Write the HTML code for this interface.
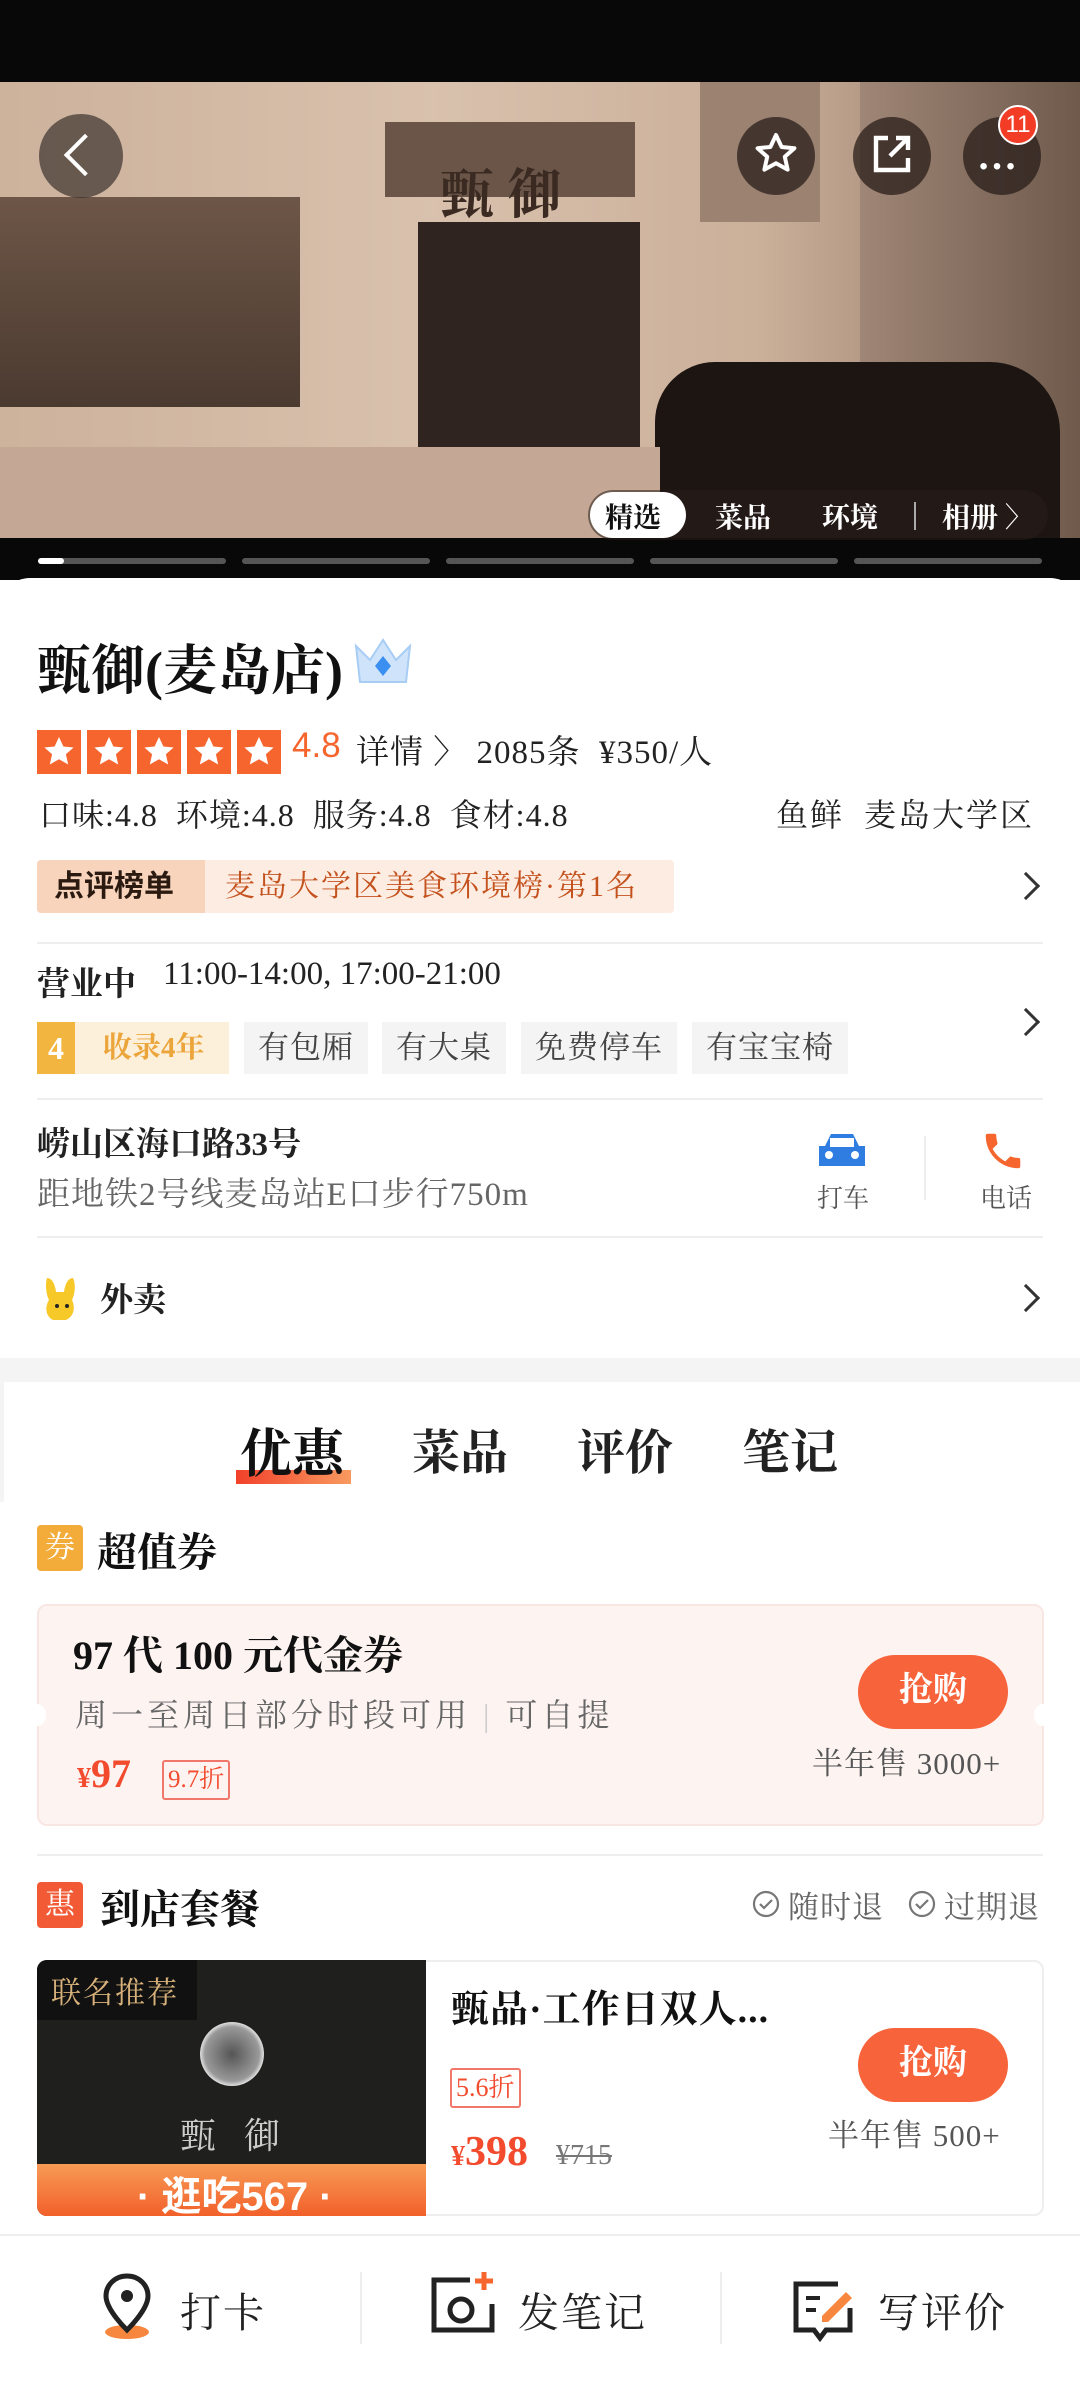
<!DOCTYPE html>
<html><head><meta charset="utf-8"><style>
*{margin:0;padding:0;box-sizing:border-box}
body{width:1080px;height:2400px;overflow:hidden;background:#fff;font-family:"Liberation Serif","Noto Serif CJK SC",serif;color:#222;position:relative}
.a{position:absolute;white-space:nowrap}
.b{font-weight:bold}
.chev{position:absolute;width:20px;height:20px;border-right:3px solid #333;border-top:3px solid #333;transform:rotate(45deg)}
.tag{position:absolute;top:1022px;height:52px;background:#f4f4f4;color:#444;font-size:31px;line-height:52px;padding:0 14px;letter-spacing:1px}
.hr{position:absolute;left:37px;right:37px;height:2px;background:#eee}
.btn{position:absolute;width:150px;height:74px;border-radius:37px;background:#f7633a;color:#fff;font-size:34px;font-weight:bold;text-align:center;line-height:72px}
</style></head><body>
<div class="a" style="left:0;top:0;width:1080px;height:580px;background:#080808"></div>
<!-- photo -->
<div class="a" style="left:0;top:82px;width:1080px;height:456px;background:linear-gradient(90deg,#cdb29c,#d8c1ad 40%,#cbb09a 70%,#8a7260);overflow:hidden">
 <div class="a" style="left:0;top:115px;width:300px;height:210px;background:linear-gradient(#6d5647,#4b3a30)"></div>
 <div class="a" style="left:385px;top:40px;width:250px;height:75px;background:#6a5548"></div>
 <div class="a" style="left:418px;top:140px;width:222px;height:280px;background:#2f241f"></div>
 <div class="a" style="left:700px;top:0;width:120px;height:140px;background:#9c8270"></div>
 <div class="a" style="left:860px;top:0;width:220px;height:456px;background:linear-gradient(90deg,#9f8676,#6f5a4c)"></div>
 <div class="a" style="left:655px;top:280px;width:405px;height:180px;border-radius:60px 70px 0 0;background:#1d1512"></div>
 <div class="a" style="left:0;top:365px;width:660px;height:91px;background:#c4a895"></div>
 <div class="a" style="left:440px;top:70px;font-size:54px;color:#3a2a22;font-weight:bold">甄 御</div>
</div>
<!-- top buttons -->
<div class="a" style="left:39px;top:114px;width:84px;height:84px;border-radius:50%;background:rgba(60,50,45,.7)"></div>
<div class="a" style="left:70px;top:140px;width:30px;height:30px;border-left:4px solid #fff;border-bottom:4px solid #fff;transform:rotate(45deg)"></div>
<div class="a" style="left:737px;top:117px;width:78px;height:78px;border-radius:50%;background:rgba(40,30,25,.75)"></div>
<svg class="a" style="left:752px;top:130px" width="48" height="48" viewBox="0 0 24 24"><path d="M12 2.5l2.8 6 6.4.6-4.8 4.3 1.4 6.4L12 16.6 6.2 19.8l1.4-6.4L2.8 9.1l6.4-.6z" fill="none" stroke="#fff" stroke-width="2" stroke-linejoin="round"/></svg>
<div class="a" style="left:853px;top:117px;width:78px;height:78px;border-radius:50%;background:rgba(40,30,25,.75)"></div>
<svg class="a" style="left:868px;top:130px" width="48" height="48" viewBox="0 0 24 24"><path d="M10 4H4v16h16v-6M14 4h6v6M20 4l-9 9" fill="none" stroke="#fff" stroke-width="2.2"/></svg>
<div class="a" style="left:963px;top:117px;width:78px;height:78px;border-radius:50%;background:rgba(40,30,25,.75)"></div>
<div class="a" style="left:977px;top:132px;color:#fff;font-size:40px;font-weight:bold">…</div>
<div class="a" style="left:998px;top:105px;width:40px;height:40px;border-radius:50%;background:#f23c26;border:2px solid #fff;color:#fff;font-size:24px;text-align:center;line-height:36px;font-family:'Liberation Sans',sans-serif">11</div>
<!-- photo tabs -->
<div class="a" style="left:588px;top:490px;width:460px;height:50px;border-radius:25px;background:rgba(40,30,25,.55)"></div>
<div class="a" style="left:590px;top:492px;width:96px;height:46px;border-radius:23px;background:#fff"></div>
<div class="a b" style="left:605px;top:496px;font-size:28px;color:#111">精选</div>
<div class="a b" style="left:715px;top:496px;font-size:28px;color:#fff">菜品</div>
<div class="a b" style="left:822px;top:496px;font-size:28px;color:#fff">环境</div>
<div class="a" style="left:914px;top:502px;width:2px;height:28px;background:#aaa"></div>
<div class="a b" style="left:942px;top:496px;font-size:28px;color:#fff">相册 〉</div>
<!-- progress -->
<div class="a" style="left:38px;top:558px;width:188px;height:6px;border-radius:3px;background:#555"></div>
<div class="a" style="left:38px;top:558px;width:26px;height:6px;border-radius:3px;background:#fff"></div>
<div class="a" style="left:242px;top:558px;width:188px;height:6px;border-radius:3px;background:#555"></div>
<div class="a" style="left:446px;top:558px;width:188px;height:6px;border-radius:3px;background:#555"></div>
<div class="a" style="left:650px;top:558px;width:188px;height:6px;border-radius:3px;background:#555"></div>
<div class="a" style="left:854px;top:558px;width:188px;height:6px;border-radius:3px;background:#555"></div>
<!-- card -->
<div class="a" style="left:0;top:578px;width:1080px;height:780px;background:#fff;border-radius:30px 30px 0 0"></div>
<div class="a b" style="left:37px;top:628px;font-size:54px;color:#111">甄御(麦岛店)</div>
<svg class="a" style="left:350px;top:636px" width="66" height="56" viewBox="0 0 66 56"><path d="M6 10l14 14L33 4l13 20 14-14-4 36H10z" fill="#cfe4fb" stroke="#a8cdf5" stroke-width="2"/><path d="M33 20l8 10-8 10-8-10z" fill="#3b8ff0"/></svg>
<!-- stars -->
<div class="a" style="left:37px;top:730px;display:flex;gap:6px">
 <svg width="44" height="44"><rect width="44" height="44" fill="#f6652e"/><path d="M22 7l4.4 9.5 10.2 1-7.7 6.8 2.3 10.2L22 29.2l-9.2 5.3 2.3-10.2-7.7-6.8 10.2-1z" fill="#fff"/></svg>
 <svg width="44" height="44"><rect width="44" height="44" fill="#f6652e"/><path d="M22 7l4.4 9.5 10.2 1-7.7 6.8 2.3 10.2L22 29.2l-9.2 5.3 2.3-10.2-7.7-6.8 10.2-1z" fill="#fff"/></svg>
 <svg width="44" height="44"><rect width="44" height="44" fill="#f6652e"/><path d="M22 7l4.4 9.5 10.2 1-7.7 6.8 2.3 10.2L22 29.2l-9.2 5.3 2.3-10.2-7.7-6.8 10.2-1z" fill="#fff"/></svg>
 <svg width="44" height="44"><rect width="44" height="44" fill="#f6652e"/><path d="M22 7l4.4 9.5 10.2 1-7.7 6.8 2.3 10.2L22 29.2l-9.2 5.3 2.3-10.2-7.7-6.8 10.2-1z" fill="#fff"/></svg>
 <svg width="44" height="44"><rect width="44" height="44" fill="#f6652e"/><path d="M22 7l4.4 9.5 10.2 1-7.7 6.8 2.3 10.2L22 29.2l-9.2 5.3 2.3-10.2-7.7-6.8 10.2-1z" fill="#fff"/></svg>
</div>
<div class="a" style="left:292px;top:726px;font-size:35px;color:#f6652e;font-family:'Liberation Sans',sans-serif">4.8</div>
<div class="a" style="left:356px;top:726px;font-size:33px;color:#222;letter-spacing:1px">详情 〉 2085条&nbsp; ¥350/人</div>
<div class="a" style="left:39px;top:790px;font-size:32px;color:#222;letter-spacing:1px">口味:4.8&nbsp; 环境:4.8&nbsp; 服务:4.8&nbsp; 食材:4.8</div>
<div class="a" style="left:776px;top:790px;font-size:32px;color:#222;letter-spacing:2px">鱼鲜&nbsp; 麦岛大学区</div>
<!-- rank -->
<div class="a" style="left:37px;top:860px;width:637px;height:53px;background:#fdece1;border-radius:4px"></div>
<div class="a" style="left:37px;top:860px;width:168px;height:53px;background:#f9d4bd;border-radius:4px 0 0 4px"></div>
<div class="a b" style="left:54px;top:860px;line-height:53px;font-size:30px;color:#2a1a10;font-family:'Liberation Sans','Noto Sans CJK SC',sans-serif">点评榜单</div>
<div class="a" style="left:225px;top:860px;line-height:53px;font-size:30px;color:#c4521e;letter-spacing:2px">麦岛大学区美食环境榜·第1名</div>
<div class="chev" style="left:1016px;top:876px"></div>
<div class="hr" style="top:942px"></div>
<div class="a b" style="left:37px;top:958px;font-size:33px">营业中</div>
<div class="a" style="left:163px;top:956px;font-size:33px">11:00-14:00, 17:00-21:00</div>
<div class="a" style="left:37px;top:1022px;width:192px;height:52px;background:#fdf0da"></div>
<div class="a b" style="left:37px;top:1022px;width:38px;height:52px;background:#f2b53f;color:#fff;font-size:32px;text-align:center;line-height:52px">4</div>
<div class="a b" style="left:103px;top:1022px;line-height:52px;font-size:29px;color:#eba53a">收录4年</div>
<div class="tag" style="left:244px">有包厢</div>
<div class="tag" style="left:382px">有大桌</div>
<div class="tag" style="left:521px">免费停车</div>
<div class="tag" style="left:692px">有宝宝椅</div>
<div class="chev" style="left:1016px;top:1012px"></div>
<div class="hr" style="top:1098px"></div>
<div class="a b" style="left:37px;top:1118px;font-size:33px">崂山区海口路33号</div>
<div class="a" style="left:37px;top:1168px;font-size:33px;color:#666;letter-spacing:1px">距地铁2号线麦岛站E口步行750m</div>
<svg class="a" style="left:815px;top:1130px" width="54" height="42" viewBox="0 0 54 42"><path d="M10 16l6-12h22l6 12h6v20H4V16z" fill="#2f7de1"/><rect x="15" y="8" width="24" height="9" fill="#fff"/><circle cx="14" cy="25" r="4" fill="#fff"/><circle cx="40" cy="25" r="4" fill="#fff"/></svg>
<div class="a" style="left:817px;top:1178px;font-size:26px;color:#555">打车</div>
<div class="a" style="left:924px;top:1136px;width:2px;height:64px;background:#eee"></div>
<svg class="a" style="left:980px;top:1126px" width="46" height="50" viewBox="0 0 24 24"><path d="M6.6 10.8c1.4 2.8 3.8 5.1 6.6 6.6l2.2-2.2c.3-.3.7-.4 1-.2 1.1.4 2.3.6 3.6.6.6 0 1 .4 1 1V20c0 .6-.4 1-1 1C10.6 21 3 13.4 3 4c0-.6.4-1 1-1h3.5c.6 0 1 .4 1 1 0 1.3.2 2.5.6 3.6.1.3 0 .7-.2 1z" fill="#f6652e"/></svg>
<div class="a" style="left:980px;top:1178px;font-size:26px;color:#555">电话</div>
<div class="hr" style="top:1236px"></div>
<svg class="a" style="left:43px;top:1274px" width="38" height="48" viewBox="0 0 38 48"><path d="M4 4c5 0 8 6 9 14h8c1-8 4-14 9-14 3 6 2 16-1 22 3 6 3 16-6 20H10C2 42 2 32 6 26 3 20 2 10 4 4z" fill="#f7c928"/><circle cx="14" cy="32" r="2" fill="#222"/><circle cx="24" cy="32" r="2" fill="#222"/></svg>
<div class="a b" style="left:100px;top:1274px;font-size:33px">外卖</div>
<div class="chev" style="left:1016px;top:1288px"></div>
<!-- gray band -->
<div class="a" style="left:0;top:1358px;width:1080px;height:24px;background:#f4f4f4"></div>
<div class="a" style="left:0;top:1382px;width:4px;height:120px;background:#f4f4f4"></div>
<!-- tabs -->
<div class="a" style="left:236px;top:1470px;width:115px;height:14px;background:linear-gradient(90deg,#f2412a,#f89a60)"></div>
<div class="a b" style="left:240px;top:1412px;font-size:52px;color:#111">优惠</div>
<div class="a b" style="left:412px;top:1414px;font-size:48px;color:#222">菜品</div>
<div class="a b" style="left:577px;top:1414px;font-size:48px;color:#222">评价</div>
<div class="a b" style="left:742px;top:1414px;font-size:48px;color:#222">笔记</div>
<!-- coupon -->
<div class="a" style="left:37px;top:1525px;width:46px;height:46px;border-radius:4px;background:#f3ac3a;color:#fff;font-size:30px;text-align:center;line-height:46px">券</div>
<div class="a b" style="left:97px;top:1521px;font-size:40px;color:#111">超值券</div>
<div class="a" style="left:37px;top:1604px;width:1007px;height:222px;border-radius:10px;background:#fdf4f2;border:2px solid #f8e6e2"></div>
<div class="a" style="left:28px;top:1704px;width:18px;height:22px;border-radius:50%;background:#fff"></div>
<div class="a" style="left:1034px;top:1704px;width:18px;height:22px;border-radius:50%;background:#fff"></div>
<div class="a b" style="left:73px;top:1624px;font-size:40px;color:#111">97 代 100 元代金券</div>
<div class="a" style="left:75px;top:1690px;font-size:32px;color:#666;letter-spacing:4px">周一至周日部分时段可用 <span style="color:#ccc">|</span> 可自提</div>
<div class="a b" style="left:77px;top:1750px;font-size:40px;color:#f24b2e"><span style="font-size:28px">¥</span>97</div>
<div class="a" style="left:162px;top:1760px;height:40px;border:2px solid #f0776a;border-radius:3px;color:#f24b2e;font-size:25px;line-height:36px;padding:0 4px">9.7折</div>
<div class="btn" style="left:858px;top:1655px">抢购</div>
<div class="a" style="left:812px;top:1738px;font-size:31px;color:#555;letter-spacing:1px">半年售 3000+</div>
<div class="hr" style="top:1854px"></div>
<!-- package -->
<div class="a" style="left:37px;top:1882px;width:46px;height:46px;border-radius:4px;background:#f25a36;color:#fff;font-size:30px;text-align:center;line-height:46px">惠</div>
<div class="a b" style="left:100px;top:1878px;font-size:40px;color:#111">到店套餐</div>
<svg class="a" style="left:752px;top:1890px" width="28" height="28" viewBox="0 0 28 28"><circle cx="14" cy="14" r="12" fill="none" stroke="#777" stroke-width="2.2"/><path d="M8 14l4 4 8-8" fill="none" stroke="#777" stroke-width="2.2"/></svg>
<div class="a" style="left:788px;top:1882px;font-size:31px;color:#666;letter-spacing:1px">随时退</div>
<svg class="a" style="left:908px;top:1890px" width="28" height="28" viewBox="0 0 28 28"><circle cx="14" cy="14" r="12" fill="none" stroke="#777" stroke-width="2.2"/><path d="M8 14l4 4 8-8" fill="none" stroke="#777" stroke-width="2.2"/></svg>
<div class="a" style="left:944px;top:1882px;font-size:31px;color:#666;letter-spacing:1px">过期退</div>
<div class="a" style="left:37px;top:1960px;width:1007px;height:256px;border-radius:10px;border:2px solid #eee"></div>
<div class="a" style="left:37px;top:1960px;width:389px;height:256px;border-radius:10px 0 0 10px;background:#1f1f1d;overflow:hidden">
 <div class="a" style="left:0;top:0;width:160px;height:60px;background:#111"></div>
 <div class="a" style="left:14px;top:8px;font-size:30px;color:#d8b27a;letter-spacing:2px">联名推荐</div>
 <div class="a" style="left:163px;top:62px;width:64px;height:64px;border-radius:50%;background:radial-gradient(#555,#999 60%,#ddd 70%,#444 75%)"></div>
 <div class="a" style="left:143px;top:148px;font-size:36px;color:#ccc;letter-spacing:28px">甄御</div>
 <div class="a" style="left:0;top:204px;width:389px;height:52px;background:linear-gradient(#f79b55,#f2602a)"></div>
 <div class="a b" style="left:100px;top:204px;font-size:40px;color:#fff;font-family:'Liberation Sans','Noto Sans CJK SC',sans-serif">· 逛吃567 ·</div>
</div>
<div class="a b" style="left:451px;top:1978px;font-size:38px;color:#111;letter-spacing:1px">甄品·工作日双人...</div>
<div class="a" style="left:450px;top:2068px;height:40px;border:2px solid #f0776a;border-radius:3px;color:#f24b2e;font-size:26px;line-height:36px;padding:0 4px">5.6折</div>
<div class="a b" style="left:451px;top:2128px;font-size:42px;color:#f24b2e"><span style="font-size:28px">¥</span>398</div>
<div class="a" style="left:556px;top:2140px;font-size:28px;color:#777;text-decoration:line-through">¥715</div>
<div class="btn" style="left:858px;top:2028px">抢购</div>
<div class="a" style="left:828px;top:2110px;font-size:31px;color:#555;letter-spacing:1px">半年售 500+</div>
<!-- bottom bar -->
<div class="a" style="left:0;top:2234px;width:1080px;height:2px;background:#eee"></div>
<svg class="a" style="left:96px;top:2270px" width="62" height="72" viewBox="0 0 62 72"><ellipse cx="31" cy="62" rx="22" ry="7" fill="#f7863e"/><path d="M31 6C19 6 10 15 10 26c0 14 21 34 21 34s21-20 21-34C52 15 43 6 31 6z" fill="#fff" stroke="#222" stroke-width="5"/><circle cx="31" cy="26" r="6" fill="#222"/></svg>
<div class="a" style="left:180px;top:2280px;font-size:41px;color:#222;letter-spacing:2px">打卡</div>
<div class="a" style="left:360px;top:2272px;width:2px;height:72px;background:#eee"></div>
<svg class="a" style="left:428px;top:2270px" width="70" height="66" viewBox="0 0 70 66"><path d="M42 10H6v50h58V34" fill="none" stroke="#222" stroke-width="5"/><circle cx="33" cy="40" r="11" fill="none" stroke="#222" stroke-width="5"/><path d="M56 2v18M47 11h18" stroke="#f6652e" stroke-width="5"/></svg>
<div class="a" style="left:518px;top:2280px;font-size:41px;color:#222;letter-spacing:2px">发笔记</div>
<div class="a" style="left:720px;top:2272px;width:2px;height:72px;background:#eee"></div>
<svg class="a" style="left:792px;top:2278px" width="64" height="64" viewBox="0 0 64 64"><path d="M46 6H4v46h18l6 8 6-8h24V30" fill="none" stroke="#222" stroke-width="5"/><path d="M14 20h14M14 32h10" stroke="#222" stroke-width="4"/><path d="M30 38l24-24 6 6-24 24h-6z" fill="#f7863e"/></svg>
<div class="a" style="left:878px;top:2280px;font-size:41px;color:#222;letter-spacing:2px">写评价</div>
</body></html>
